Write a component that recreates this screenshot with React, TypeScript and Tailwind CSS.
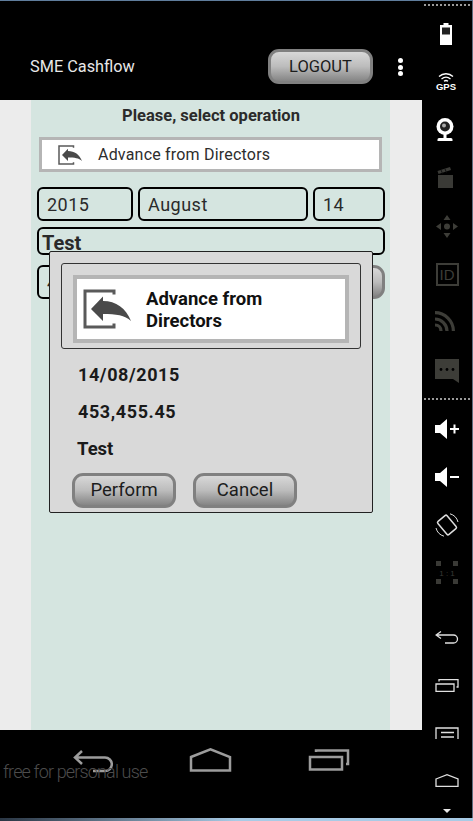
import React from "react";

function ExitIcon({ className }: { className: string }) {
  return (
    <svg viewBox="0 0 48 40" className={className} fill="none">
      <path d="M31 5.500V2H2V38H31V34.500" stroke="#5a5a5a" strokeWidth="3" />
      <path d="M8 20 L20 7.500 V12 C33 12 43 19 48 32 C42 26 33 25 20 25 V32 Z" fill="#4a4a4a" />
    </svg>
  );
}

function Field({ className, children }: { className: string; children?: React.ReactNode }) {
  return (
    <div className={`h-[34px] rounded-[6px] border-2 border-[#000] pl-[8px] text-[18px] leading-[32px] text-[#2a2a2a] tracking-[0.5px] ${className}`}>
      {children}
    </div>
  );
}

const btn =
  "rounded-[11px] border-[3px] border-[#808080] bg-gradient-to-b from-[#d8d8d8] via-[#bcbcbc] to-[#858585] text-[#1c1c1c] flex items-center justify-center";

function Rail() {
  return (
    <div className="flex w-[51px] shrink-0 flex-col items-center border-r border-[#5d6d80] bg-black">
      <div className="mt-[3px] w-[46px] border-t-2 border-dotted border-[#9a9a9a]" />
      <svg width="12" height="22" viewBox="0 0 12 22" className="mr-[3px] mt-[17px]">
        <path fill="#fff" d="M3.500 0h5v2H12v20H0V2h3.500z" />
        <rect x="2" y="4.500" width="8" height="7" fill="#222" />
      </svg>
      <svg width="22" height="18" viewBox="0 0 22 18" className="mr-[3px] mt-[27px]">
        <path d="M4 4.500C8 .8 14 .8 18 4.500M6.500 7C9.500 4.500 12.500 4.500 15.500 7M9 9.200c1.500-1 2.500-1 4 0" stroke="#fff" strokeWidth="1.300" fill="none" />
        <text x="11" y="17.500" textAnchor="middle" fill="#fff" fontSize="9.500" fontWeight="700" fontFamily="'Liberation Sans',sans-serif">GPS</text>
      </svg>
      <svg width="20" height="23" viewBox="0 0 20 23" className="mr-[4px] mt-[28px]">
        <circle cx="10" cy="8.500" r="8.500" fill="#fff" />
        <circle cx="10" cy="8.500" r="5" fill="#222" />
        <circle cx="9" cy="7.500" r="2" fill="#aaa" />
        <path fill="#fff" d="M8.500 16h3v4h4.500a1.500 1.500 0 0 1 1.500 1.500V23h-15v-1.500A1.500 1.500 0 0 1 4 20h4.500z" />
      </svg>
      <svg width="17" height="21" viewBox="0 0 17 21" className="mr-[3px] mt-[26px]">
        <path fill="#3a3a36" d="M1 8h15v13H1zM0.500 4 13 0l1 3L1.500 7z" />
        <path stroke="#111" strokeWidth="1" d="M4 3 5.500 6.500M8 2 9.500 5.500" />
      </svg>
      <svg width="24" height="23" viewBox="0 0 24 23" fill="#3d3d38" className="mt-[27px]">
        <path d="M12 0l3.500 5h-7zM12 23l-3.500-5h7zM1 11.500l5-3.500v7zM23 11.500l-5 3.500v-7z" />
        <circle cx="12" cy="11.500" r="3" />
      </svg>
      <div className="mt-[25px] flex h-[23px] w-[23px] items-center justify-center border-2 border-[#3d3d38] text-[15px] leading-none text-[#3d3d38] font-['Liberation_Sans',sans-serif]">ID</div>
      <svg width="20" height="20" viewBox="0 0 20 20" fill="none" stroke="#3d3d38" strokeWidth="3.200" className="mr-[4px] mt-[25px]">
        <path d="M0 1.600C10 1.600 18.400 10 18.400 20M0 8C6.500 8 12 13.500 12 20M0 14c3.500 0 6 2.500 6 6" />
      </svg>
      <svg width="24" height="24" viewBox="0 0 24 24" className="mt-[28px]">
        <path fill="#3d3d38" d="M0 0h24v24l-6-4H0z" />
        <circle cx="6" cy="10.500" r="1.400" fill="#000" />
        <circle cx="12" cy="10.500" r="1.400" fill="#000" />
        <circle cx="18" cy="10.500" r="1.400" fill="#000" />
      </svg>
      <div className="mt-[15px] w-[46px] border-t-2 border-dotted border-[#9a9a9a]" />
      <svg width="24" height="20" viewBox="0 0 24 20" className="mt-[19px]">
        <path fill="#fff" d="M0 6h5l7-6v20l-7-6H0z" />
        <path stroke="#fff" strokeWidth="2" d="M15 10h9M19.500 5.500v9" />
      </svg>
      <svg width="24" height="20" viewBox="0 0 24 20" className="mt-[28px]">
        <path fill="#fff" d="M0 6h5l7-6v20l-7-6H0z" />
        <path stroke="#fff" strokeWidth="2" d="M15 10h9" />
      </svg>
      <svg width="24" height="24" viewBox="0 0 24 24" fill="none" stroke="#ddd" className="mt-[26px]">
        <rect x="6" y="3.500" width="12" height="17" rx="1.500" strokeWidth="1.500" transform="rotate(-40 12 12)" />
        <path d="M15 .8A11.500 11.500 0 0 1 23 9M9 23.200A11.500 11.500 0 0 1 1 15" strokeWidth="1" />
      </svg>
      <svg width="24" height="25" viewBox="0 0 24 25" fill="#3a3a36" className="mt-[23px]">
        <path d="M1 1h5v5H1zM18 1h5v5h-5zM1 19h5v5H1zM18 19h5v5h-5z" />
        <text x="12" y="16" textAnchor="middle" fontSize="8" fontFamily="'Liberation Sans',sans-serif">1 : 1</text>
      </svg>
      <svg width="24" height="13" viewBox="0 0 24 13" fill="none" stroke="#e0e0e0" strokeWidth="1.300" className="mt-[46px]">
        <path d="M6 .5 1 4 6 7.500M1 4h17.500a4 4 0 0 1 0 8H10" />
      </svg>
      <svg width="24" height="13" viewBox="0 0 24 13" fill="none" stroke="#e0e0e0" strokeWidth="1.300" className="mt-[35px]">
        <path d="M1 5h18v7.500H1zM4 2.500V.7h19V8h-1.500" />
      </svg>
      <svg width="24" height="12" viewBox="0 0 24 12" fill="none" stroke="#e0e0e0" strokeWidth="1.300" className="mt-[35px]">
        <path d="M1 12V1h22v11M6 5.500h13M6 10h13" />
      </svg>
      <svg width="24" height="13" viewBox="0 0 24 13" fill="none" stroke="#e0e0e0" strokeWidth="1.300" className="mt-[35px]">
        <path d="M1 5 12 .7 23 5v7.300H1z" />
      </svg>
      <svg width="8" height="4" viewBox="0 0 8 4" className="mt-[22px]"><path fill="#e8e8e8" d="M0 0h8L4 4z" /></svg>
    </div>
  );
}

export default function App() {
  return (
    <div className="relative flex h-[821px] w-[473px] flex-col overflow-hidden bg-black font-['Roboto',sans-serif]">
      <div className="h-[1px] shrink-0 bg-[#5f7d9c]" />
      <div className="flex min-h-0 flex-1">
        <div className="flex w-[422px] shrink-0 flex-col">
          <header className="flex h-[99px] items-end bg-black pb-[16px] pl-[30px] pr-[19px]">
            <span className="mb-[7px] text-[16.300px] leading-[20px] text-[#e8e8e8]">SME Cashflow</span>
            <div className={`${btn} ml-auto h-[35px] w-[105px] pt-[2px] text-[16.500px]`}>LOGOUT</div>
            <div className="mb-[8px] ml-[25px] flex flex-col gap-[1.500px]">
              <span className="h-[5px] w-[5px] rounded-full bg-white" />
              <span className="h-[5px] w-[5px] rounded-full bg-white" />
              <span className="h-[5px] w-[5px] rounded-full bg-white" />
            </div>
          </header>

          <main className="h-[630px] bg-[#ececec] pl-[31px] pr-[32px]">
            <div className="h-full bg-[#d5e5e0] pl-[6px] pr-[5px]">
              <div className="pt-[6px] text-center text-[16.500px] leading-[20px] font-bold text-[#2b2b2b]">Please, select operation</div>
              <div className="ml-[2px] mr-[3px] mt-[11px] flex h-[35px] items-center border-[3px] border-[#b5b5b5] bg-white">
                <ExitIcon className="ml-[15px] h-[20px] w-[26px]" />
                <span className="ml-[15px] text-[16px] tracking-[0.2px] text-[#2d2d2d]">Advance from Directors</span>
              </div>
              <div className="mt-[15px] flex gap-[5px]">
                <Field className="w-[96px]">2015</Field>
                <Field className="w-[170px]">August</Field>
                <Field className="flex-1">14</Field>
              </div>
              <div className="mt-[6px] h-[28px] rounded-[6px] border-2 border-[#000] pl-[3px] text-[20px] leading-[29px] font-bold text-[#2a2a2a]">Test</div>
              <div className="mt-[10px] flex gap-[5px]">
                <Field className="w-[200px]">4</Field>
                <div className={`${btn} h-[34px] flex-1`} />
              </div>
            </div>
          </main>

          <footer className="relative flex flex-1 bg-black">
            <svg width="40" height="23" viewBox="0 0 40 23" className="ml-[73px] mt-[20px]" fill="none" stroke="#9c9c9c" strokeWidth="2.500">
              <path d="M9 1 2 7.500 9 14M2 7.500h30a6.800 6.800 0 0 1 0 13.600H20" />
            </svg>
            <svg width="44" height="24" viewBox="0 0 44 24" className="ml-[76px] mt-[18px]" fill="none" stroke="#9c9c9c" strokeWidth="2.500">
              <path d="M2 9 21.500 1.300 41 9v13.500H2z" />
            </svg>
            <svg width="42" height="22" viewBox="0 0 42 22" className="ml-[75px] mt-[19px]" fill="none" stroke="#9c9c9c" strokeWidth="2.500">
              <path d="M2 8h32v12.500H2zM8 3V1.500h32V15h-2" />
            </svg>
            <span className="absolute left-[3px] top-[31px] text-[18px] leading-[22px] font-light tracking-[-0.85px] text-[#4c4c4c]">free for personal use</span>
          </footer>
        </div>

        <Rail />
      </div>
      <div className="h-[3px] shrink-0 bg-gradient-to-r from-[#2a3644] via-[#a8cbe6] to-[#a8cbe6]" />

      <div className="absolute left-[49px] top-[251px] h-[262px] w-[324px] rounded-[2px] border border-[#222] bg-[#d9d9d9] px-[11px] pt-[11px]">
        <div className="h-[86px] rounded-[3px] border border-[#333] px-[11px] pt-[11px]">
          <div className="flex h-[68px] items-center border-[4px] border-[#b5b5b5] bg-white">
            <ExitIcon className="ml-[6px] h-[40px] w-[48px]" />
            <div className="ml-[15px] w-[150px] pt-[1px] text-[18.500px] leading-[22px] font-bold text-[#111]">Advance from Directors</div>
          </div>
        </div>
        <div className="ml-[17px] mt-[15px] text-[18px] leading-[22px] font-bold tracking-[0.6px] text-[#1a1a1a]">14/08/2015</div>
        <div className="ml-[17px] mt-[15px] text-[18px] leading-[22px] font-bold tracking-[0.6px] text-[#1a1a1a]">453,455.45</div>
        <div className="ml-[16px] mt-[15px] text-[18.500px] leading-[22px] font-bold text-[#1a1a1a]">Test</div>
        <div className="ml-[11px] mt-[13px] flex gap-[17px]">
          <div className={`${btn} h-[35px] w-[104px] pt-[1px] text-[18.500px]`}>Perform</div>
          <div className={`${btn} h-[35px] w-[104px] pt-[1px] text-[18.500px]`}>Cancel</div>
        </div>
      </div>
    </div>
  );
}
